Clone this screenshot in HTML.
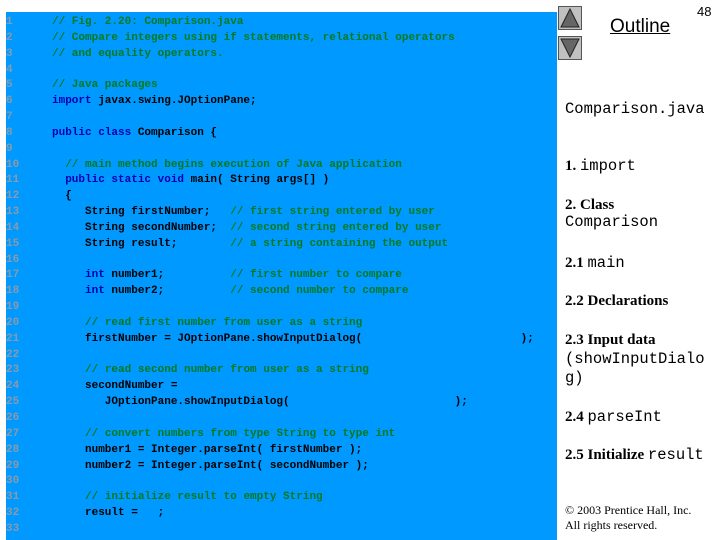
<!DOCTYPE html>
<html><head><meta charset="utf-8"><style>
body{margin:0;width:720px;height:540px;background:#fff;position:relative;overflow:hidden;font-family:"Liberation Sans",sans-serif}
#code{position:absolute;left:6px;top:12px;width:551px;height:528px;background:#0099ff}
.l{position:absolute;left:0;height:16px;line-height:16px;font-family:"Liberation Mono",monospace;font-size:11px;font-weight:bold;white-space:pre;color:#000}
.n{position:absolute;left:0;color:#8a9aa8;font-size:11px}
.c{color:#007a1e}.k{color:#0000b0}
.r{position:absolute;left:565px;font-family:"Liberation Serif",serif;font-size:15px;font-weight:bold;color:#000}
.m{font-family:"Liberation Mono",monospace;font-weight:normal;font-size:15.5px}
.btn{position:absolute;left:558px;width:24px;height:24px;background:#c0c0c0;border:1px solid #555;box-sizing:border-box}
</style></head><body>
<div id="code"></div>
<div class="btn" style="top:6px"><svg width="22" height="22"><polygon points="11,2 20,20 2,20" fill="#666" stroke="#222"/></svg></div>
<div class="btn" style="top:36px"><svg width="22" height="22"><polygon points="2,2 20,2 11,20" fill="#666" stroke="#222"/></svg></div>
<div style="position:absolute;left:610px;top:16px;font-size:19px;text-decoration:underline">Outline</div>
<div style="position:absolute;left:697px;top:4px;font-size:13px">48</div>
<div class="r m" style="top:100px">Comparison.java</div>
<div class="r" style="top:157px">1. <span class="m">import</span></div>
<div class="r" style="top:197px">2. Class<br><span class="m" style="position:relative;top:-1px">Comparison</span></div>
<div class="r" style="top:254px">2.1 <span class="m">main</span></div>
<div class="r" style="top:293px">2.2 Declarations</div>
<div class="r" style="top:331px;line-height:19px">2.3 Input data<br><span class="m">(showInputDialo<br>g)</span></div>
<div class="r" style="top:408px">2.4 <span class="m">parseInt</span></div>
<div class="r" style="top:446px">2.5 Initialize <span class="m">result</span></div>
<div style="position:absolute;left:565px;top:503px;font-family:'Liberation Serif',serif;font-size:12px;line-height:15px">© 2003 Prentice Hall, Inc.<br>All rights reserved.</div>
<div id="lines"></div>
<script>
var L=[
'<span class="c">// Fig. 2.20: Comparison.java</span>',
'<span class="c">// Compare integers using if statements, relational operators</span>',
'<span class="c">// and equality operators.</span>',
'',
'<span class="c">// Java packages</span>',
'<span class="k">import</span> javax.swing.JOptionPane;',
'',
'<span class="k">public class</span> Comparison {',
'',
'  <span class="c">// main method begins execution of Java application</span>',
'  <span class="k">public static void</span> main( String args[] )',
'  {',
'     String firstNumber;   <span class="c">// first string entered by user</span>',
'     String secondNumber;  <span class="c">// second string entered by user</span>',
'     String result;        <span class="c">// a string containing the output</span>',
'',
'     <span class="k">int</span> number1;          <span class="c">// first number to compare</span>',
'     <span class="k">int</span> number2;          <span class="c">// second number to compare</span>',
'',
'     <span class="c">// read first number from user as a string</span>',
'     firstNumber = JOptionPane.showInputDialog(                        );',
'',
'     <span class="c">// read second number from user as a string</span>',
'     secondNumber =',
'        JOptionPane.showInputDialog(                         );',
'',
'     <span class="c">// convert numbers from type String to type int</span>',
'     number1 = Integer.parseInt( firstNumber );',
'     number2 = Integer.parseInt( secondNumber );',
'',
'     <span class="c">// initialize result to empty String</span>',
'     result =   ;',
''];
var h='';
for(var i=0;i<L.length;i++){var t=14+i*15.84;
h+='<div class="l n" style="left:6px;top:'+t+'px">'+(i+1)+'</div><div class="l" style="left:52px;top:'+t+'px">'+L[i]+'</div>';}
document.getElementById('lines').innerHTML=h;
</script>
</body></html>
